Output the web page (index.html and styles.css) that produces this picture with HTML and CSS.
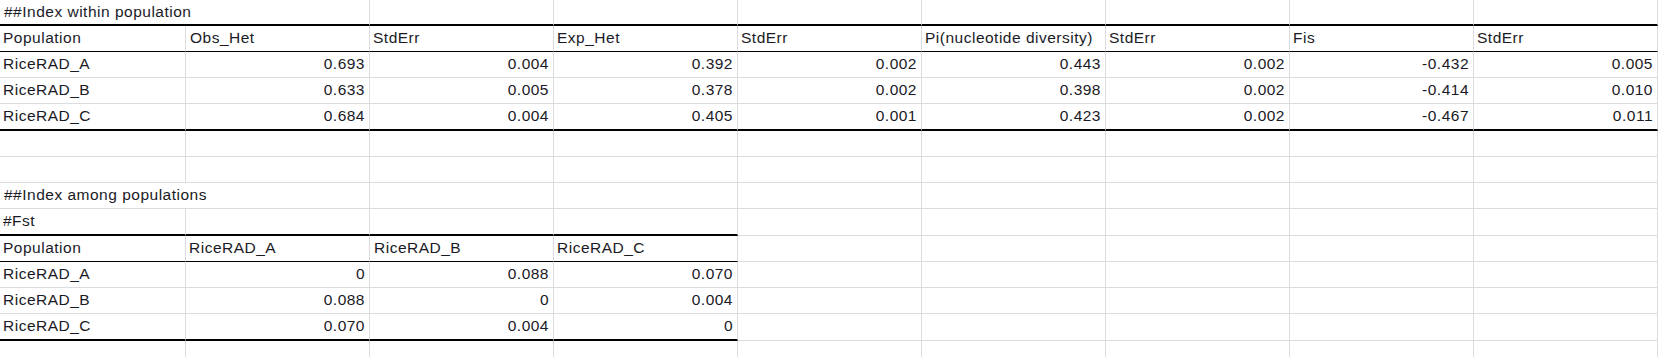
FILE: index.html
```html
<!DOCTYPE html>
<html lang="en">
<head>
<meta charset="utf-8">
<title>Index within population</title>
<link rel="stylesheet" href="styles.css">
</head>
<body>
<div class="sheet">
  <!-- r0 -->
  <div class="c span2 thick">##Index within population</div>
  <div class="c thick"></div><div class="c thick"></div><div class="c thick"></div><div class="c thick"></div><div class="c thick"></div><div class="c thick"></div><div class="c thick"></div>
  <!-- r1 -->
  <div class="c hdr">Population</div><div class="c hdr">Obs_Het</div><div class="c hdr">StdErr</div><div class="c hdr">Exp_Het</div><div class="c hdr">StdErr</div><div class="c hdr">Pi(nucleotide diversity)</div><div class="c hdr">StdErr</div><div class="c hdr">Fis</div><div class="c hdr">StdErr</div>
  <!-- r2 -->
  <div class="c">RiceRAD_A</div><div class="c num">0.693</div><div class="c num">0.004</div><div class="c num">0.392</div><div class="c num">0.002</div><div class="c num">0.443</div><div class="c num">0.002</div><div class="c num">-0.432</div><div class="c num">0.005</div>
  <!-- r3 -->
  <div class="c">RiceRAD_B</div><div class="c num">0.633</div><div class="c num">0.005</div><div class="c num">0.378</div><div class="c num">0.002</div><div class="c num">0.398</div><div class="c num">0.002</div><div class="c num">-0.414</div><div class="c num">0.010</div>
  <!-- r4 -->
  <div class="c thick">RiceRAD_C</div><div class="c num thick">0.684</div><div class="c num thick">0.004</div><div class="c num thick">0.405</div><div class="c num thick">0.001</div><div class="c num thick">0.423</div><div class="c num thick">0.002</div><div class="c num thick">-0.467</div><div class="c num thick">0.011</div>
  <!-- r5 -->
  <div class="c"></div><div class="c"></div><div class="c"></div><div class="c"></div><div class="c"></div><div class="c"></div><div class="c"></div><div class="c"></div><div class="c"></div>
  <!-- r6 -->
  <div class="c"></div><div class="c"></div><div class="c"></div><div class="c"></div><div class="c"></div><div class="c"></div><div class="c"></div><div class="c"></div><div class="c"></div>
  <!-- r7 -->
  <div class="c span2">##Index among populations</div><div class="c"></div><div class="c"></div><div class="c"></div><div class="c"></div><div class="c"></div><div class="c"></div><div class="c"></div>
  <!-- r8 -->
  <div class="c thick">#Fst</div><div class="c thick"></div><div class="c thick"></div><div class="c thick"></div><div class="c"></div><div class="c"></div><div class="c"></div><div class="c"></div><div class="c"></div>
  <!-- r9 -->
  <div class="c hdr">Population</div><div class="c hdr">RiceRAD_A</div><div class="c hdr">RiceRAD_B</div><div class="c hdr">RiceRAD_C</div><div class="c"></div><div class="c"></div><div class="c"></div><div class="c"></div><div class="c"></div>
  <!-- r10 -->
  <div class="c">RiceRAD_A</div><div class="c num">0</div><div class="c num">0.088</div><div class="c num">0.070</div><div class="c"></div><div class="c"></div><div class="c"></div><div class="c"></div><div class="c"></div>
  <!-- r11 -->
  <div class="c">RiceRAD_B</div><div class="c num">0.088</div><div class="c num">0</div><div class="c num">0.004</div><div class="c"></div><div class="c"></div><div class="c"></div><div class="c"></div><div class="c"></div>
  <!-- r12 -->
  <div class="c thick">RiceRAD_C</div><div class="c num thick">0.070</div><div class="c num thick">0.004</div><div class="c num thick">0</div><div class="c"></div><div class="c"></div><div class="c"></div><div class="c"></div><div class="c"></div>
  <!-- r13 -->
  <div class="c"></div><div class="c"></div><div class="c"></div><div class="c"></div><div class="c"></div><div class="c"></div><div class="c"></div><div class="c"></div><div class="c"></div>
</div>
</body>
</html>
```
FILE: styles.css
```css
html, body {
  margin: 0;
  padding: 0;
  background: #ffffff;
}

body {
  font-family: "Liberation Sans", Arial, sans-serif;
  font-size: 15.5px;
  letter-spacing: 0.5px;
  color: #1a1a26;
  overflow: hidden;
}

.sheet {
  display: grid;
  grid-template-columns: 186px repeat(8, 184px);
  grid-template-rows: 26px 26px 26px 26px 27px 26px 26px 26px 27px 26px 26px 26px 27px 26px;
}

.c {
  box-sizing: border-box;
  border-right: 1px solid #dadcdf;
  border-bottom: 1px solid #dadcdf;
  padding: 0 3px 0 3px;
  line-height: 24px;
  white-space: nowrap;
  overflow: visible;
}

.c:nth-child(9n+1) {
  padding-left: 4px;
}

.span2 {
  grid-column: span 2;
  padding-left: 4px;
}

.num {
  text-align: right;
  padding-right: 4px;
}

.hdr {
  border-bottom: 1px solid #000000;
}

.thick {
  border-bottom: 2px solid #000000;
}
```
